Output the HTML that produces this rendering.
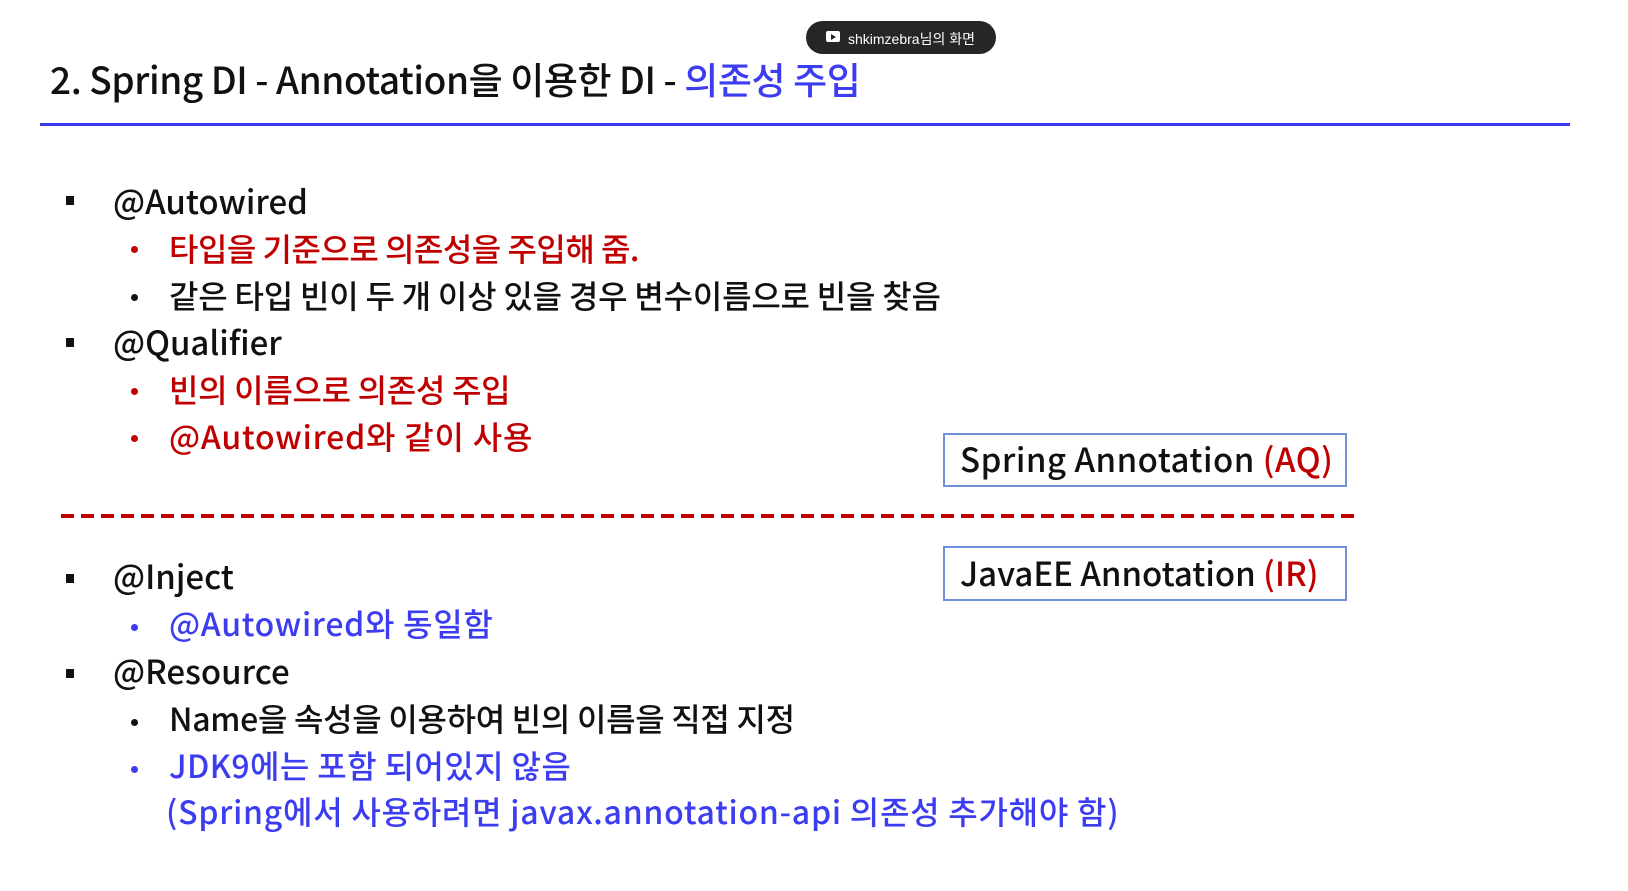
<!DOCTYPE html>
<html><head><meta charset="utf-8"><style>
body{margin:0;width:1628px;height:891px;background:#fff;overflow:hidden;position:relative;font-family:"Liberation Sans","Noto Sans CJK KR",sans-serif;}
.t{position:absolute;white-space:nowrap;font-family:"Noto Sans CJK KR","Liberation Sans",sans-serif;font-weight:500;letter-spacing:0px;line-height:1;}
.r{color:#c00000}.b{color:#3c3cf0}.k{color:#111}
.sq{position:absolute;width:8px;height:9px;background:#111;}
.dot{position:absolute;width:7px;height:7px;border-radius:50%;}
.box{position:absolute;border:2px solid #6f8fd8;box-sizing:border-box;background:#fff;}
</style></head><body>
<div style="position:absolute;left:806px;top:21px;width:190px;height:33px;border-radius:17px;background:#262626;"></div>
<div style="position:absolute;left:826px;top:31px;width:14px;height:11px;background:#fff;border-radius:2px;"></div>
<div style="position:absolute;left:831px;top:34px;width:0;height:0;border-left:5px solid #262626;border-top:3px solid transparent;border-bottom:3px solid transparent;"></div>
<div style="position:absolute;left:848px;top:29px;color:#fff;font-size:14px;font-family:'Liberation Sans','Noto Sans CJK KR',sans-serif;">shkimzebra님의 화면</div>

<div class="t k" style="left:50px;top:60px;font-size:37px;letter-spacing:-0.4px;">2. Spring DI - Annotation을 이용한 DI - <span class="b">의존성 주입</span></div>
<div style="position:absolute;left:40px;top:123px;width:1530px;height:3px;background:#3a3af0;"></div>

<div class="sq" style="left:66px;top:196px"></div>
<div class="t k" style="left:113px;top:184px;font-size:33px;">@Autowired</div>
<div class="dot" style="left:131px;top:246px;background:#c00000"></div>
<div class="t r" style="left:169px;top:232px;font-size:32px;letter-spacing:-0.5px;">타입을 기준으로 의존성을 주입해 줌.</div>
<div class="dot" style="left:131px;top:294px;background:#111"></div>
<div class="t k" style="left:169px;top:279px;font-size:32px;letter-spacing:-0.2px;">같은 타입 빈이 두 개 이상 있을 경우 변수이름으로 빈을 찾음</div>
<div class="sq" style="left:66px;top:338px"></div>
<div class="t k" style="left:113px;top:325px;font-size:33px;">@Qualifier</div>
<div class="dot" style="left:131px;top:388px;background:#c00000"></div>
<div class="t r" style="left:169px;top:373px;font-size:32px;letter-spacing:-0.3px;">빈의 이름으로 의존성 주입</div>
<div class="dot" style="left:131px;top:435px;background:#c00000"></div>
<div class="t r" style="left:169px;top:420px;font-size:32px;letter-spacing:0.8px;">@Autowired와 같이 사용</div>

<div class="box" style="left:943px;top:433px;width:404px;height:54px;"></div>
<div class="t k" style="left:960px;top:442px;font-size:33px;letter-spacing:0.5px;">Spring Annotation <span class="r">(AQ)</span></div>

<div style="position:absolute;left:61px;top:514px;width:1293px;height:4px;background:repeating-linear-gradient(90deg,#c00000 0 13px,transparent 13px 20px);"></div>

<div class="box" style="left:943px;top:546px;width:404px;height:55px;"></div>
<div class="t k" style="left:960px;top:556px;font-size:33px;letter-spacing:0px;">JavaEE Annotation <span class="r">(IR)</span></div>

<div class="sq" style="left:66px;top:574px"></div>
<div class="t k" style="left:113px;top:559px;font-size:33px;">@Inject</div>
<div class="dot" style="left:131px;top:624px;background:#3c3cf0"></div>
<div class="t b" style="left:169px;top:607px;font-size:32px;letter-spacing:0.7px;">@Autowired와 동일함</div>
<div class="sq" style="left:66px;top:669px"></div>
<div class="t k" style="left:113px;top:654px;font-size:33px;">@Resource</div>
<div class="dot" style="left:131px;top:719px;background:#111"></div>
<div class="t k" style="left:169px;top:702px;font-size:32px;letter-spacing:-0.3px;">Name을 속성을 이용하여 빈의 이름을 직접 지정</div>
<div class="dot" style="left:131px;top:766px;background:#3c3cf0"></div>
<div class="t b" style="left:169px;top:749px;font-size:32px;letter-spacing:0.4px;">JDK9에는 포함 되어있지 않음</div>
<div class="t b" style="left:166px;top:795px;font-size:32px;letter-spacing:0.75px;">(Spring에서 사용하려면 javax.annotation-api 의존성 추가해야 함)</div>
</body></html>
